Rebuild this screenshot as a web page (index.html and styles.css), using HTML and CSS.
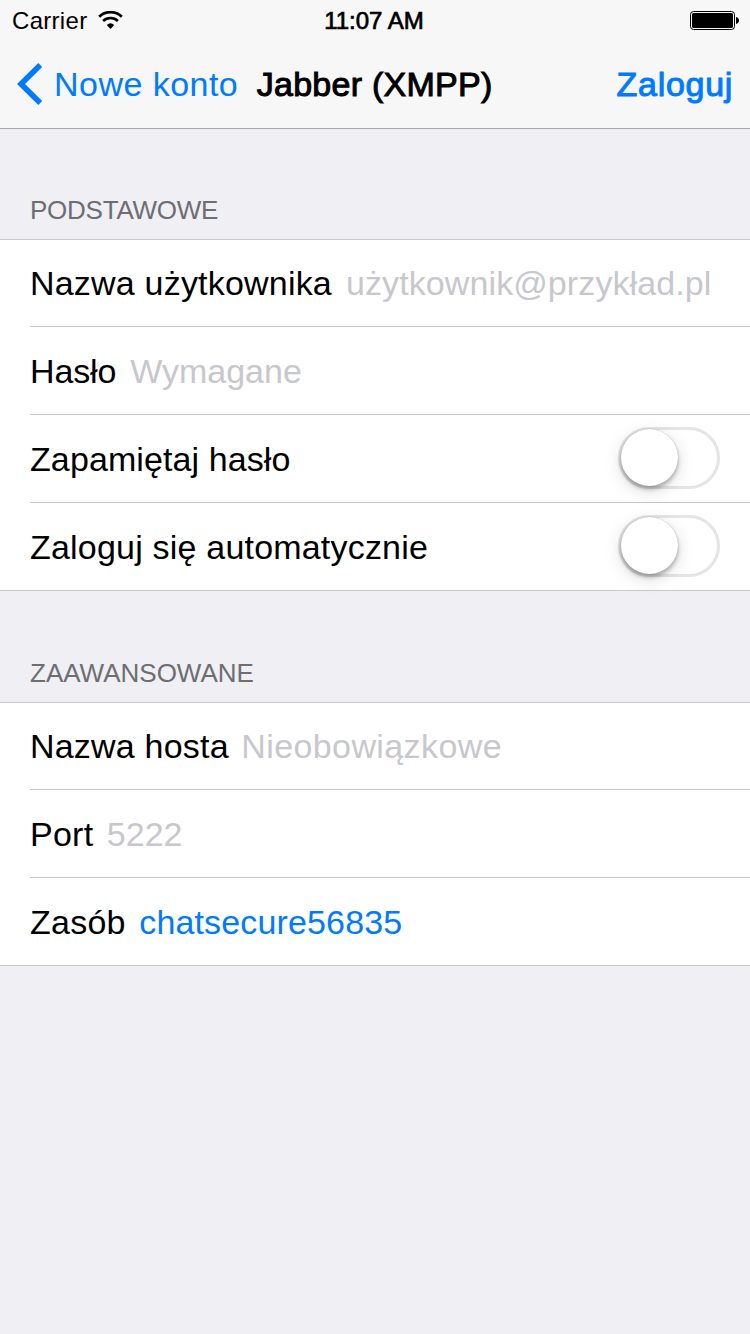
FILE: index.html
```html
<!DOCTYPE html>
<html lang="pl">
<head>
<meta charset="utf-8">
<title>Jabber (XMPP)</title>
<link rel="stylesheet" href="styles.css">
</head>
<body>
<header class="header">
  <div class="status">
    <div class="status-left">
      <span class="carrier">Carrier</span>
      <svg class="wifi" width="25" height="18" viewBox="0 0 25 18">
        <path d="M1.2 5.7 A16.5 16.5 0 0 1 23.8 5.7" fill="none" stroke="#000" stroke-width="2.8"/>
        <path d="M5.1 10 A10.8 10.8 0 0 1 19.9 10" fill="none" stroke="#000" stroke-width="2.6"/>
        <path d="M12.5 18 L8.8 13.9 A5.6 5.6 0 0 1 16.2 13.9 Z" fill="#000"/>
      </svg>
    </div>
    <span class="clock medium">11:07 AM</span>
    <svg class="battery" width="50" height="20" viewBox="0 0 50 20">
      <rect x="0.5" y="0.5" width="44" height="18" rx="3" fill="none" stroke="#000"/>
      <rect x="2" y="2" width="41" height="15" rx="1.5" fill="#000"/>
      <path d="M46 6 Q49 6.7 49 9.5 Q49 12.4 46 13.1 Z" fill="#000"/>
    </svg>
  </div>
  <nav class="nav">
    <a class="back">
      <svg class="chevron" width="26" height="42" viewBox="0 0 26 42">
        <path d="M21.3 0 L25.2 3.9 L8 21 L25.2 38.1 L21.3 42 L0 21 Z" fill="#007aff"/>
      </svg>
      <span class="back-label">Nowe konto</span>
    </a>
    <h1 class="title medium">Jabber (XMPP)</h1>
    <a class="login medium">Zaloguj</a>
  </nav>
</header>
<main>
  <h2 class="section-label basic">PODSTAWOWE</h2>
  <section class="group">
    <div class="row"><span class="label">Nazwa użytkownika</span><span class="hint hint-user">użytkownik@przykład.pl</span></div>
    <div class="row"><span class="label label-password">Hasło</span><span class="hint hint-password">Wymagane</span></div>
    <div class="row"><span class="label label-remember">Zapamiętaj hasło</span><span class="switch"><i class="knob"></i></span></div>
    <div class="row"><span class="label">Zaloguj się automatycznie</span><span class="switch"><i class="knob"></i></span></div>
  </section>
  <h2 class="section-label advanced">ZAAWANSOWANE</h2>
  <section class="group">
    <div class="row"><span class="label">Nazwa hosta</span><span class="hint hint-host">Nieobowiązkowe</span></div>
    <div class="row"><span class="label label-short">Port</span><span class="hint hint-port">5222</span></div>
    <div class="row"><span class="label label-short">Zasób</span><span class="value">chatsecure56835</span></div>
  </section>
</main>
</body>
</html>
```
FILE: styles.css
```css
* { box-sizing: border-box; }

body {
  margin: 0;
  width: 750px;
  min-height: 1334px;
  background: #efeff4;
  color: #000;
  font-family: "Liberation Sans", Arial, sans-serif;
  font-size: 34px;
  line-height: 40px;
  white-space: nowrap;
}

h1, h2 { margin: 0; font-weight: 400; }

.medium { -webkit-text-stroke: 1px currentColor; }

.header {
  height: 129px;
  background: #f7f7f7;
  border-bottom: 1px solid #a7a7ab;
}

.status {
  display: grid;
  grid-template-columns: 1fr auto 1fr;
  align-items: center;
  height: 40px;
  padding: 1px 10px 0 12px;
  font-size: 24px;
}

.status-left { display: flex; align-items: center; gap: 11px; }
.carrier { letter-spacing: 0.3px; }
.wifi { margin-bottom: 2px; }
.clock { margin-right: 4px; -webkit-text-stroke-width: 0.7px; }
.battery { justify-self: end; }

.nav {
  display: flex;
  align-items: center;
  height: 88px;
  padding: 0 17px;
}

.back { display: flex; align-items: center; gap: 11px; color: #007aff; }
.back-label { letter-spacing: 0.47px; }
.title { margin-left: 18.5px; font-size: 34px; letter-spacing: 0.26px; }
.login { margin-left: auto; color: #007aff; letter-spacing: 0.7px; }

.section-label {
  height: 110px;
  padding: 61px 30px 0;
  font-size: 26px;
  color: #6d6d72;
}
.basic { letter-spacing: -0.25px; }
.advanced { height: 111px; padding-top: 62px; }

.group {
  background: #fff;
  border-top: 1px solid #c8c7cc;
  border-bottom: 1px solid #c8c7cc;
}

.row {
  display: flex;
  align-items: center;
  height: 88px;
  margin-left: 30px;
  padding-right: 30px;
  border-bottom: 1px solid #c8c7cc;
}
.row:first-child { height: 87px; }
.row:last-child { height: 87px; border-bottom: 0; }

.label { letter-spacing: 0.2px; }
.label-password { letter-spacing: -0.15px; }
.label-remember { letter-spacing: 0.1px; }
.label-short { letter-spacing: 0.25px; }

.hint, .value { margin-left: 14px; }
.hint { color: #c7c7cd; }
.hint-user { letter-spacing: 0.1px; }
.hint-host { margin-left: 12.5px; letter-spacing: 0.4px; }
.hint-port { margin-left: 13.5px; }
.value { margin-left: 13.5px; color: #007aff; letter-spacing: 0.15px; }

.switch {
  width: 102px;
  height: 62px;
  margin: 0 0 2px auto;
  border: 3px solid #e5e5e5;
  border-radius: 31px;
}
.knob {
  display: block;
  width: 57px;
  height: 57px;
  margin-top: -1px;
  border-radius: 50%;
  background: #fff;
  box-shadow: 0 0 1px rgba(0,0,0,.3), 0 3px 4px rgba(0,0,0,.28), 0 5px 18px rgba(0,0,0,.14);
}
```
